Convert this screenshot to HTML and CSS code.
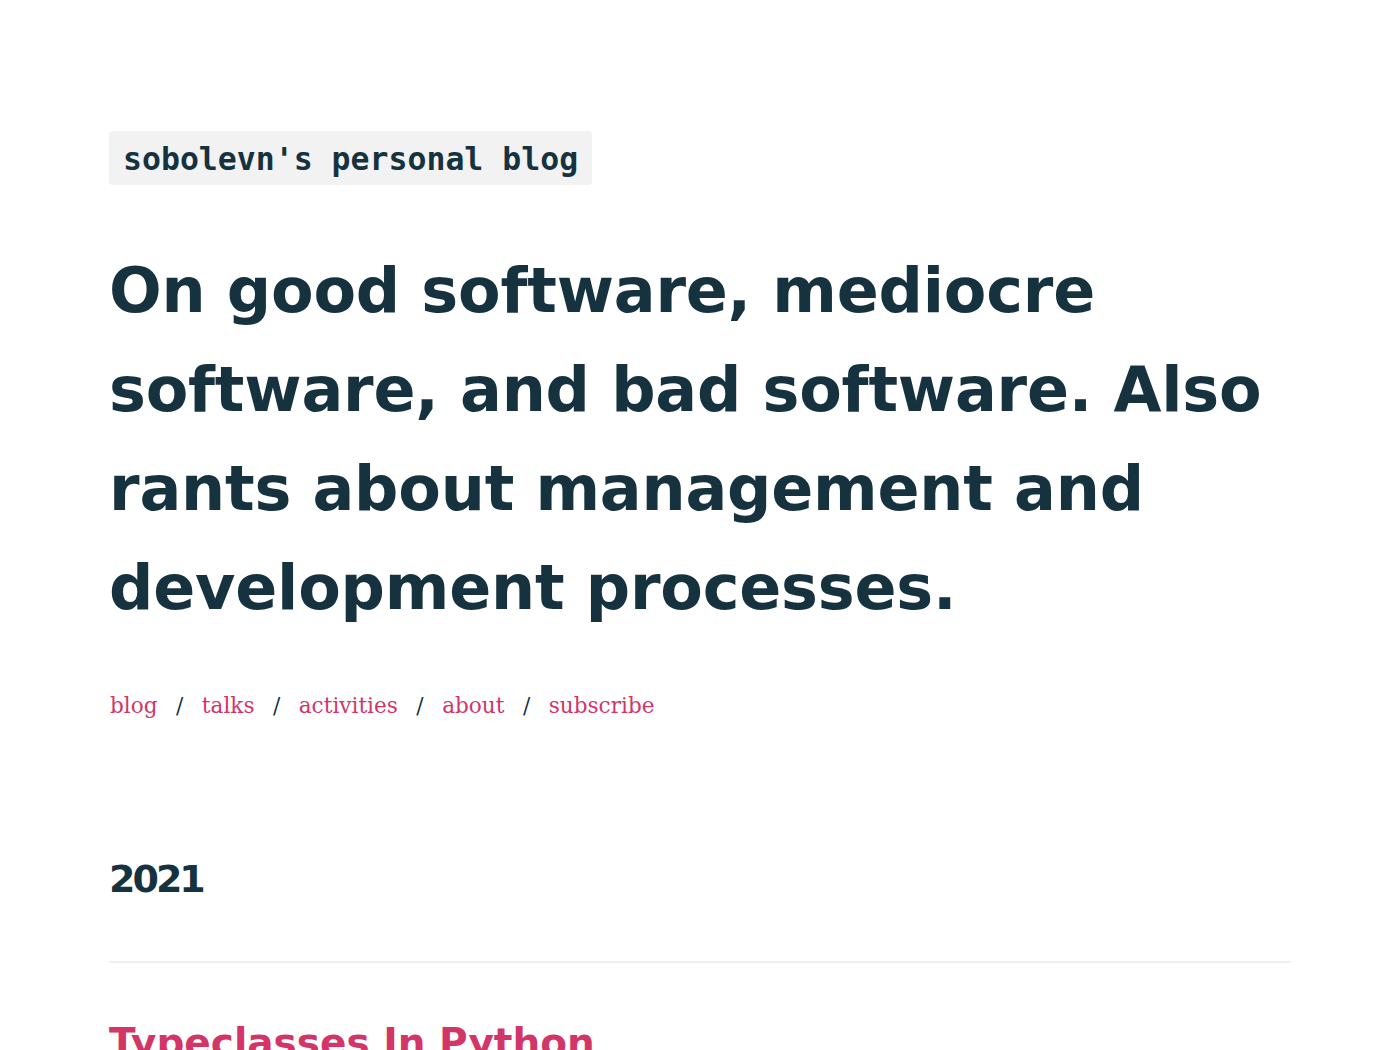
FILE: index.html
```html
<!DOCTYPE html>
<html lang="en">
<head>
<meta charset="utf-8">
<title>sobolevn's personal blog</title>
<link rel="stylesheet" href="styles.css">
</head>
<body>
<div class="page">
  <header class="header">
    <div class="brand"><span class="brand-tag">sobolevn's personal blog</span></div>
    <h1 class="tagline">On good software, mediocre software, and bad software. Also rants about management and development processes.</h1>
    <nav class="nav">
      <a href="#" class="nav-link">blog</a>
      <span class="nav-sep">/</span>
      <a href="#" class="nav-link">talks</a>
      <span class="nav-sep">/</span>
      <a href="#" class="nav-link">activities</a>
      <span class="nav-sep">/</span>
      <a href="#" class="nav-link">about</a>
      <span class="nav-sep">/</span>
      <a href="#" class="nav-link">subscribe</a>
    </nav>
  </header>
  <main class="posts">
    <h2 class="year">2021</h2>
    <hr class="divider">
    <article class="post">
      <h3 class="post-title"><a href="#">Typeclasses In Python</a></h3>
    </article>
  </main>
</div>
</body>
</html>
```

FILE: styles.css
```css
html, body {
  margin: 0;
  padding: 0;
  background: #ffffff;
}
body {
  color: #17323f;
  font-family: "DejaVu Serif", serif;
}
.page {
  width: 1182px;
  margin: 0 auto;
  padding-top: 131px;
}
.brand {
  display: flex;
}
.brand-tag {
  display: block;
  background: #f2f2f2;
  border-radius: 4px;
  padding: 0 14px 0 14px;
  height: 54px;
  line-height: 56px;
  font-family: "DejaVu Sans Mono", monospace;
  font-weight: bold;
  font-size: 31.5px;
  color: #17323f;
  white-space: pre;
}
.tagline {
  margin: 56px 0 0 0;
  font-family: "DejaVu Sans", sans-serif;
  font-weight: bold;
  font-size: 62px;
  line-height: 99px;
  color: #17323f;
  letter-spacing: -0.2px;
}
.nav {
  display: flex;
  align-items: baseline;
  margin: 54px 0 0 1px;
  font-family: "DejaVu Serif", serif;
  font-size: 21.6px;
  line-height: 30px;
}
.nav-link {
  color: #d23669;
  text-decoration: none;
}
.nav-sep {
  color: #17323f;
  margin: 0 18.5px;
}
.posts {
  margin-top: 136px;
}
.year {
  margin: 0;
  font-family: "DejaVu Sans", sans-serif;
  font-weight: bold;
  font-size: 38px;
  line-height: 44px;
  letter-spacing: -3px;
  color: #17323f;
}
.divider {
  border: 0;
  border-top: 2px solid #f0f0f0;
  margin: 60px 0 0 0;
}
.post-title {
  margin: 56px 0 0 0;
  font-family: "DejaVu Sans", sans-serif;
  font-weight: bold;
  font-size: 39px;
  line-height: 48px;
}
.post-title a {
  color: #d23669;
  text-decoration: none;
}
```
